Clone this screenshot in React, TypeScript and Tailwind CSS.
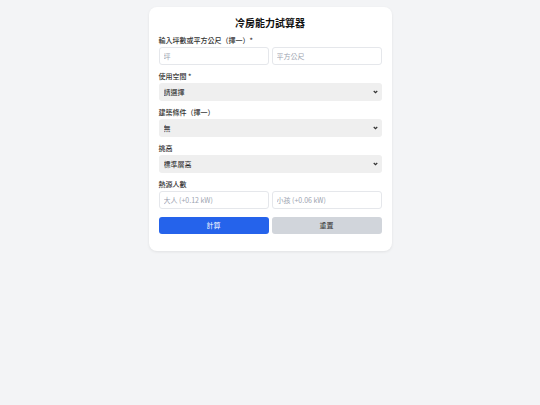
import { useState } from "react";

const font = "font-['Noto_Sans_CJK_TC','Noto_Sans',sans-serif]";

function Field(props: { label: string; children: React.ReactNode }) {
  return (
    <div className="flex flex-col">
      <label className="h-[10px] text-[7px] leading-[10px] font-medium text-[#333] mb-[2px]">{props.label}</label>
      {props.children}
    </div>
  );
}

function Select(props: { value: string; options: [string, string][] }) {
  return (
    <div className="relative h-[18px]">
      <select
        className="block h-[18px] w-full appearance-none rounded-[3px] bg-[#efefef] pl-[5px] pr-[12px] text-[7px] leading-[18px] text-[#222] outline-none"
        defaultValue={props.value}
      >
        {props.options.map(([v, t]) => (
          <option key={v} value={v}>
            {t}
          </option>
        ))}
      </select>
      <svg
        className="pointer-events-none absolute right-[4px] top-[7px] w-[5px] h-[4px]"
        viewBox="0 0 10 8"
        fill="none"
        stroke="#333"
        strokeWidth="2.4"
      >
        <path d="M1.5 2l3.5 3.5L8.5 2" />
      </svg>
    </div>
  );
}

export default function App() {
  const [ping, setPing] = useState("");
  const [sqm, setSqm] = useState("");
  const [adult, setAdult] = useState("");
  const [child, setChild] = useState("");

  const inputCls =
    "block h-[18px] w-full min-w-0 border border-[#e5e7eb] rounded-[3px] bg-white px-[4px] text-[7px] text-[#333] placeholder:text-[#9ca3af] outline-none";

  return (
    <div className={`min-h-[405px] bg-[#f3f4f6] pt-[7px] ${font}`}>
      <div className="mx-auto w-[243px] bg-white rounded-[8px] shadow-[0_1px_3px_rgba(0,0,0,0.08)] px-[10px] pt-[10px] pb-[17px]">
        <h1 className="text-center text-[10px] leading-[12px] font-bold text-[#111] mb-[6px]">冷房能力試算器</h1>
        <div className="flex flex-col gap-[6px]">
          <Field label="輸入坪數或平方公尺（擇一）*">
            <div className="flex gap-[3px]">
              <input className={inputCls} placeholder="坪" value={ping} onChange={(e) => setPing(e.target.value)} />
              <input className={inputCls} placeholder="平方公尺" value={sqm} onChange={(e) => setSqm(e.target.value)} />
            </div>
          </Field>
          <Field label="使用空間 *">
            <Select value="" options={[["", "請選擇"], ["bedroom", "臥室"], ["living", "客廳"]]} />
          </Field>
          <Field label="建築條件（擇一）">
            <Select value="none" options={[["none", "無"], ["top", "頂樓"], ["west", "西曬"]]} />
          </Field>
          <Field label="挑高">
            <Select value="std" options={[["std", "標準層高"], ["high", "挑高"]]} />
          </Field>
          <Field label="熱源人數">
            <div className="flex gap-[3px]">
              <input className={inputCls} placeholder="大人 (+0.12 kW)" value={adult} onChange={(e) => setAdult(e.target.value)} />
              <input className={inputCls} placeholder="小孩 (+0.06 kW)" value={child} onChange={(e) => setChild(e.target.value)} />
            </div>
          </Field>
          <div className="flex gap-[3px] mt-[2px]">
            <button className="h-[17px] flex-1 rounded-[3px] bg-[#2563eb] text-white text-[7px]">計算</button>
            <button
              className="h-[17px] flex-1 rounded-[3px] bg-[#d1d5db] text-[#333] text-[7px]"
              onClick={() => {
                setPing("");
                setSqm("");
                setAdult("");
                setChild("");
              }}
            >
              重置
            </button>
          </div>
        </div>
      </div>
    </div>
  );
}
